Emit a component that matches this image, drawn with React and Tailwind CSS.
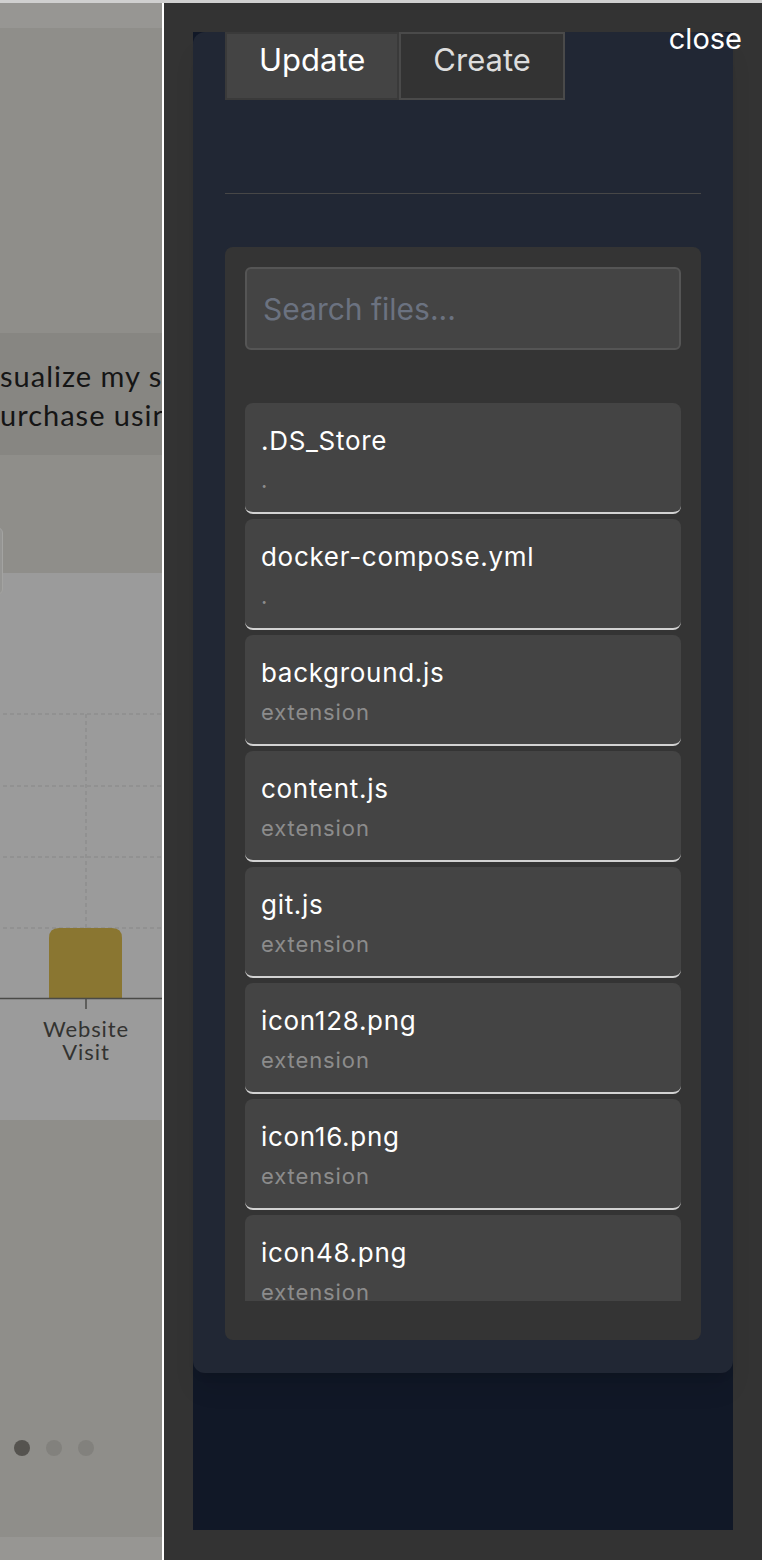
import React from "react";

const files = [
  { name: ".DS_Store", dir: "." },
  { name: "docker-compose.yml", dir: "." },
  { name: "background.js", dir: "extension" },
  { name: "content.js", dir: "extension" },
  { name: "git.js", dir: "extension" },
  { name: "icon128.png", dir: "extension" },
  { name: "icon16.png", dir: "extension" },
  { name: "icon48.png", dir: "extension" },
  { name: "manifest.json", dir: "extension" },
  { name: "popup.html", dir: "extension" },
];

function FunnelChart() {
  return (
    <svg width="162" height="547" viewBox="0 0 162 547" className="block">
      {[141, 213, 284, 355].map((y) => (
        <line
          key={y}
          x1="3"
          x2="162"
          y1={y}
          y2={y}
          stroke="#878787"
          strokeWidth="1"
          strokeDasharray="4 3"
        />
      ))}
      <line x1="86" x2="86" y1="141" y2="425" stroke="#878787" strokeDasharray="4 3" />
      <path d="M49 425 V365 Q49 355 59 355 H112 Q122 355 122 365 V425 Z" fill="#8a7631" />
      <line x1="0" x2="162" y1="425.5" y2="425.5" stroke="#4a4a47" strokeWidth="1.5" />
      <line x1="86" x2="86" y1="426" y2="436" stroke="#4a4a47" strokeWidth="1.5" />
      <text x="86" y="464" textAnchor="middle" fontSize="22" fill="#333331" fontFamily="Lato, sans-serif" letterSpacing="0.9">
        Website
      </text>
      <text x="86" y="487" textAnchor="middle" fontSize="22" fill="#333331" fontFamily="Lato, sans-serif" letterSpacing="0.9">
        Visit
      </text>
    </svg>
  );
}

function LeftPane() {
  return (
    <div className="relative w-[162px] shrink-0 overflow-hidden flex flex-col" style={{ fontFamily: "Lato, sans-serif" }}>
      <div className="h-[25px] bg-[#979693]" />
      <div className="h-[305px] bg-[#8f8e8a]" />
      <div className="h-[122px] bg-[#878682] pt-[23px] text-[29px] leading-[39px] text-[#151515] whitespace-nowrap tracking-[1px]">
        <p>sualize my sales</p>
        <p>urchase using</p>
      </div>
      <div className="h-[118px] bg-[#8f8e8a]" />
      <div className="h-[547px] bg-[#9b9b9b]">
        <FunnelChart />
      </div>
      <div className="h-[417px] bg-[#8f8e8a] pt-[320px] pl-[14px] flex gap-4 items-start">
        <span className="w-4 h-4 rounded-full bg-[#55534f]" />
        <span className="w-4 h-4 rounded-full bg-[#82817d]" />
        <span className="w-4 h-4 rounded-full bg-[#82817d]" />
      </div>
      <div className="h-[23px] bg-[#979693]" />
      <div className="absolute left-[-10px] top-[524px] w-[13px] h-[68px] rounded-r-md border border-[#a3a3a1] bg-[#959593]" />
    </div>
  );
}

function FileItem({ file }) {
  return (
    <div className="bg-[#444444] rounded-lg border-b-2 border-[#d2d2d2] px-4 pt-[22px] pb-[18px]">
      <p className="text-[26px] leading-[32px] tracking-[0.7px] text-white">{file.name}</p>
      <p className="mt-[9px] text-[22px] leading-[28px] tracking-[0.9px] text-[#8c8c8c]">{file.dir}</p>
    </div>
  );
}

export default function App() {
  return (
    <div className="w-[762px] h-[1560px] flex flex-col bg-[#333333]" style={{ fontFamily: "Inter, 'Noto Sans', sans-serif" }}>
      <div className="h-[3px] bg-[#d0d0d0]" />
      <div className="flex flex-1">
        <LeftPane />
        <div className="w-[2px] bg-white" />
        <div className="relative flex-1 bg-[#333333] px-[29px] pt-[29px] pb-[30px] flex">
          <div className="flex-1 bg-[#111827] flex flex-col">
            <div className="bg-[#212734] rounded-xl shadow-xl px-8 pb-[33px]">
              <div className="flex">
                <button className="h-[68px] px-8 pt-[8px] pb-[20px] border-2 border-[#3a3a3a] bg-[#444444] text-white text-[31px] leading-9">
                  Update
                </button>
                <button className="h-[68px] px-8 pt-[8px] pb-[20px] border-2 border-[#4a4a4a] bg-[#333333] text-[#dddddd] text-[31px] leading-9">
                  Create
                </button>
              </div>
              <div className="mt-[93px] h-px bg-[#474747]" />
              <div className="mt-[53px] bg-[#343434] rounded-lg px-5 pt-5 pb-[39px]">
                <input
                  type="text"
                  placeholder="Search files..."
                  className="w-full h-[83px] px-4 bg-[#444444] border-2 border-[#555555] rounded-md text-[30px] text-white placeholder:text-[#6b7280] outline-none"
                />
                <div className="mt-[53px] h-[898px] overflow-hidden flex flex-col gap-[5px]">
                  {files.map((f) => (
                    <FileItem key={f.name} file={f} />
                  ))}
                </div>
              </div>
            </div>
          </div>
          <button className="absolute right-[20px] top-[20px] text-[29px] leading-8 text-white">close</button>
        </div>
      </div>
    </div>
  );
}
